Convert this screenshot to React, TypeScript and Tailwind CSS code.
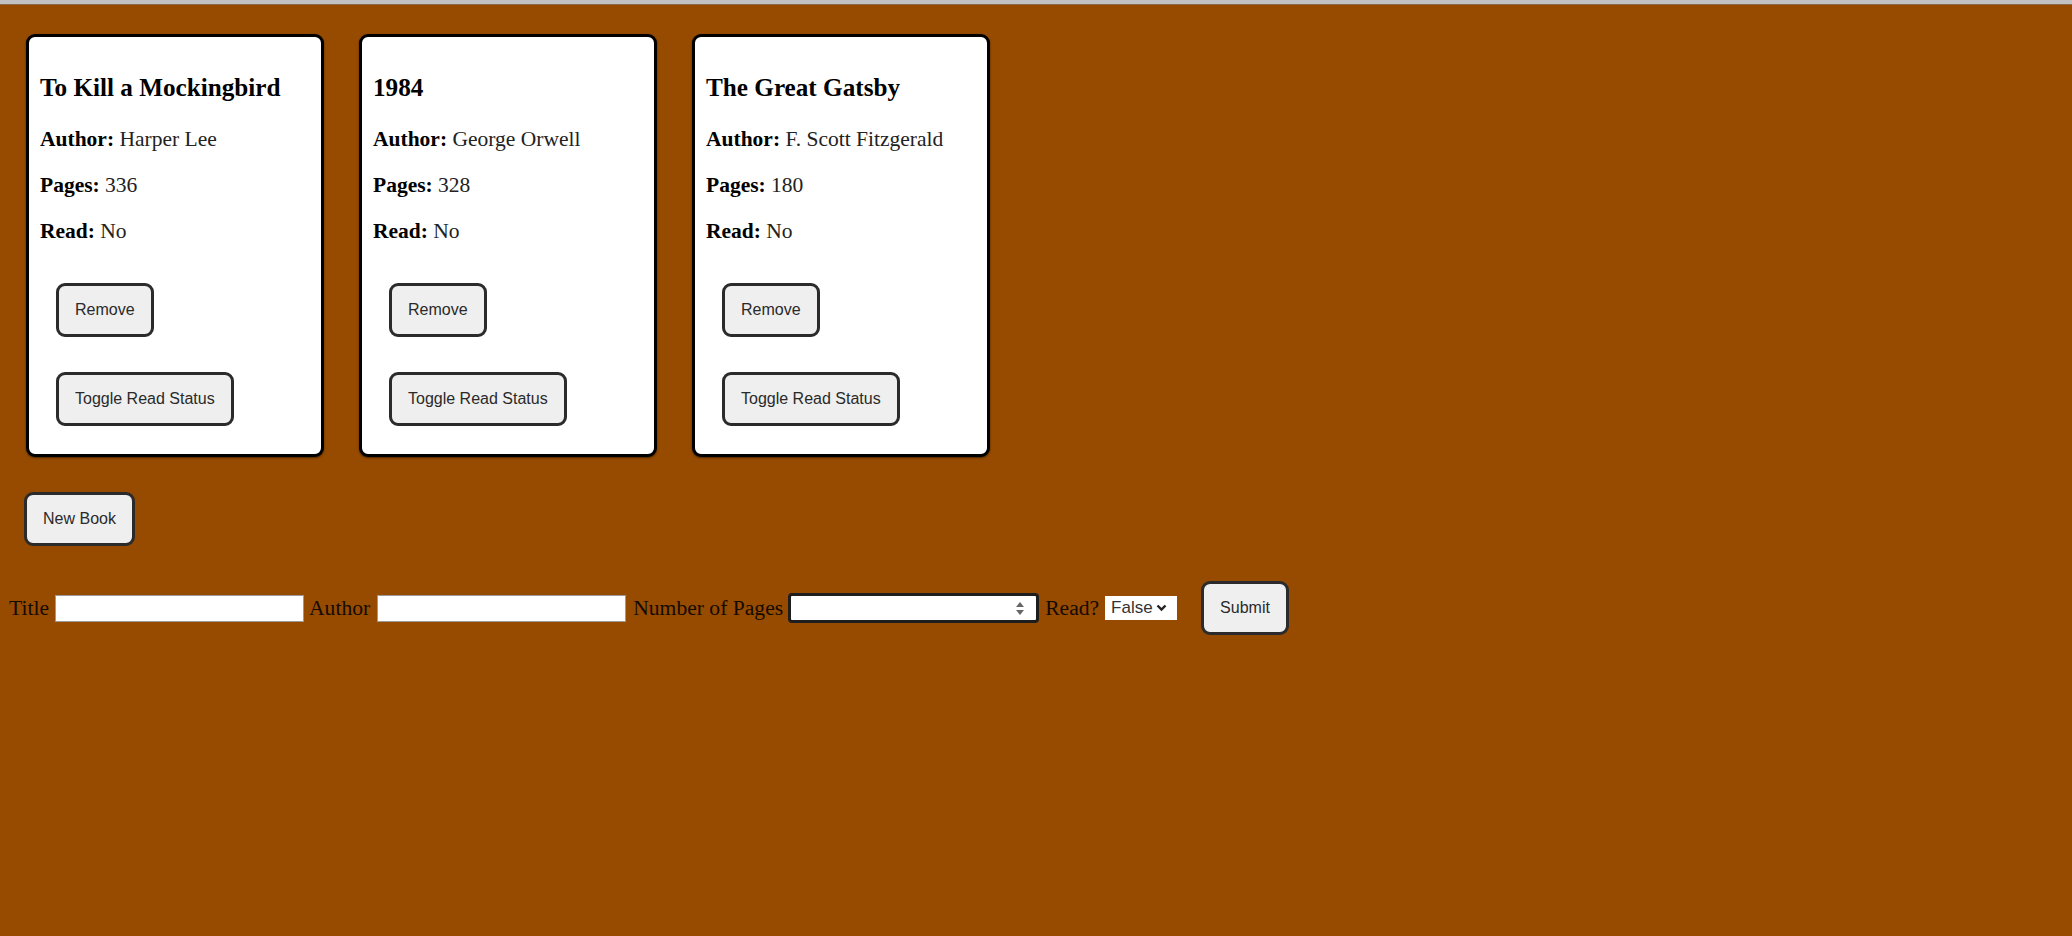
const books = [
  { title: "To Kill a Mockingbird", author: "Harper Lee", pages: 336, read: false },
  { title: "1984", author: "George Orwell", pages: 328, read: false },
  { title: "The Great Gatsby", author: "F. Scott Fitzgerald", pages: 180, read: false },
];

const btn =
  "font-['Liberation_Sans',Arial,sans-serif] text-[16px] leading-[18px] text-[#2a2a2a] bg-[#efefef] border-[3px] border-[#2b2b2b] rounded-[9px] px-[16px] py-[15px]";

function BookCard({ book }: { book: (typeof books)[number] }) {
  return (
    <div className="w-[298px] h-[423px] bg-white border-[3px] border-black rounded-[9px] pl-[11px] pt-[37px] shadow-[0_1px_2px_rgba(0,0,0,0.5)]">
      <h3 className="text-[25.2px] font-bold leading-[28px] text-black">{book.title}</h3>
      <p className="mt-[25px] text-[21.5px] leading-[24px] text-[#222]">
        <b className="text-black">Author:</b> {book.author}
      </p>
      <p className="mt-[22px] text-[21.5px] leading-[24px] text-[#222]">
        <b className="text-black">Pages:</b> {book.pages}
      </p>
      <p className="mt-[22px] text-[21.5px] leading-[24px] text-[#222]">
        <b className="text-black">Read:</b> {book.read ? "Yes" : "No"}
      </p>
      <div className="ml-[16px] mt-[40px] flex flex-col items-start gap-[35px]">
        <button className={btn}>Remove</button>
        <button className={btn}>Toggle Read Status</button>
      </div>
    </div>
  );
}

export default function App() {
  return (
    <div className="min-h-screen bg-[#964B00] font-['Liberation_Serif','Times_New_Roman',serif]">
      <div className="h-[4px] bg-[#c2c2c2]" />
      <div className="h-[1px] bg-[#8a6a4a]" />

      <div className="flex gap-[35px] pl-[26px] pt-[29px]">
        {books.map((b) => (
          <BookCard key={b.title} book={b} />
        ))}
      </div>

      <div className="pl-[24px] mt-[35px]">
        <button className={btn}>New Book</button>
      </div>

      <form className="mt-[35px] pl-[9px] flex items-center text-[21.6px] text-[#140a00]">
        <label>Title</label>
        <input className="ml-[6px] w-[249px] h-[27px] bg-white border border-[#9a9a9a]" />
        <label className="ml-[5px]">Author</label>
        <input className="ml-[7px] w-[249px] h-[27px] bg-white border border-[#9a9a9a]" />
        <label className="ml-[7px]">Number of Pages</label>
        <div className="ml-[5px] w-[251px] h-[30px] bg-white border-[3px] border-[#1e1e1e] rounded-[4px] flex items-center justify-end pr-[11px]">
          <svg width="10" height="17" viewBox="0 0 10 17">
            <path d="M1 7 L5 2 L9 7 Z" fill="#666" />
            <path d="M1 10 L5 15 L9 10 Z" fill="#666" />
          </svg>
        </div>
        <label className="ml-[6px]">Read?</label>
        <div className="ml-[6px] w-[72px] h-[24px] bg-white flex items-center pl-[6px] gap-[3px] font-['Liberation_Sans',Arial,sans-serif] text-[17px] text-[#333]">
          <span>False</span>
          <svg width="11" height="8" viewBox="0 0 11 8">
            <path d="M1.5 1.5 L5.5 5.5 L9.5 1.5" stroke="#222" strokeWidth="2.4" fill="none" />
          </svg>
        </div>
        <button type="button" className={`ml-[24px] ${btn}`}>
          Submit
        </button>
      </form>
    </div>
  );
}
